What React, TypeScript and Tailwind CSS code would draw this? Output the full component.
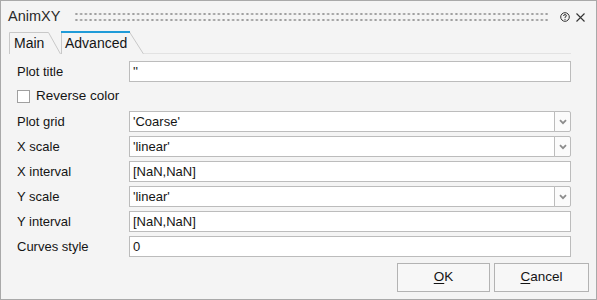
import React from "react";

function Chevron() {
  return (
    <svg width="8" height="6" viewBox="0 0 8 6">
      <path d="M1 1.2 L4 4.2 L7 1.2" fill="none" stroke="#8c8c8c" strokeWidth="1.8" />
    </svg>
  );
}

function Field({ label, value, select }: { label: string; value: string; select?: boolean }) {
  return (
    <div className="flex h-[21px] items-center">
      <div className="w-[128px] pl-[16px] text-[13px] text-[#141414]">{label}</div>
      <div className="flex h-full flex-1">
        <div className="flex flex-1 items-center border border-[#bcbcbc] bg-white pl-[3px] text-[13px] text-[#141414]">
          {value}
        </div>
        {select && (
          <div className="-ml-px flex w-[17px] items-center justify-center rounded-r-[2px] border border-[#bcbcbc] bg-[#fbfbfb]">
            <Chevron />
          </div>
        )}
      </div>
    </div>
  );
}

export default function App() {
  return (
    <div className="flex h-[300px] w-[597px] flex-col border border-[#a9a9a9] bg-[#f4f4f4] font-['Liberation_Sans',Arial,sans-serif]">
      {/* Title bar */}
      <div className="flex h-[30px] items-center pl-[7px] pr-[11px] pt-[2px]">
        <span className="text-[14.5px] text-[#2a2a2a]">AnimXY</span>
        <div className="ml-[14px] h-[12px] flex-1 bg-[radial-gradient(circle,#9c9c9c_1px,transparent_1.2px)] bg-[length:4.75px_6px]" />
        <svg className="ml-[12px]" width="10" height="10" viewBox="0 0 10 10">
          <circle cx="5" cy="5" r="4.3" fill="none" stroke="#333" strokeWidth="1" />
          <path d="M3.6 4 Q3.6 2.6 5 2.6 Q6.4 2.6 6.4 3.8 Q6.4 4.6 5 5.2 V5.9" fill="none" stroke="#333" strokeWidth="1" />
          <circle cx="5" cy="7.3" r="0.6" fill="#333" />
        </svg>
        <svg className="ml-[6px]" width="9" height="9" viewBox="0 0 9 9">
          <path d="M0.5 0.5 L8.5 8.5 M8.5 0.5 L0.5 8.5" stroke="#333" strokeWidth="1.1" />
        </svg>
      </div>

      {/* Tabs */}
      <div className="flex h-[23px] items-end pl-[8px] pr-[25px]">
        <div className="relative flex h-[22px] w-[52px] items-center pl-[5px] pt-[1px] text-[14px] text-[#141414]">
          <svg className="absolute inset-0" width="52" height="22" viewBox="0 0 52 22">
            <path d="M0.5 22 V0.5 H39.5 L51.5 22" fill="none" stroke="#c8c8c8" />
          </svg>
          <span className="relative">Main</span>
        </div>
        <div className="relative flex h-[23px] w-[83px] items-center pl-[4px] pt-[1px] text-[14px] text-[#141414]">
          <svg className="absolute inset-0" width="83" height="23" viewBox="0 0 83 23">
            <path d="M0.5 23 V1 H68.5 L82.5 23" fill="none" stroke="#c8c8c8" />
            <rect x="0" y="0" width="69" height="2" fill="#1f9bd8" />
          </svg>
          <span className="relative">Advanced</span>
        </div>
        <div className="flex-1 border-b border-[#e2e2e2]" />
      </div>

      {/* Form */}
      <div className="flex flex-col gap-[4px] pr-[25px] pt-[7px]">
        <Field label="Plot title" value="''" />
        <div className="flex h-[21px] items-center">
          <div className="ml-[16px] h-[13px] w-[13px] border border-[#a0a0a0] bg-white" />
          <span className="ml-[6px] text-[13.5px] text-[#141414]">Reverse color</span>
        </div>
        <Field label="Plot grid" value="'Coarse'" select />
        <Field label="X scale" value="'linear'" select />
        <Field label="X interval" value="[NaN,NaN]" />
        <Field label="Y scale" value="'linear'" select />
        <Field label="Y interval" value="[NaN,NaN]" />
        <Field label="Curves style" value="0" />
      </div>

      {/* Buttons */}
      <div className="mt-[6px] flex justify-end gap-[4px] pr-[7px]">
        <button className="flex h-[29px] w-[93px] items-center justify-center border border-[#b3b3b3] bg-[#f7f7f7] text-[13.5px] text-[#141414]">
          <span className="underline underline-offset-2">O</span>K
        </button>
        <button className="flex h-[29px] w-[95px] items-center justify-center border border-[#b3b3b3] bg-[#f7f7f7] text-[13.5px] text-[#141414]">
          <span className="underline underline-offset-2">C</span>ancel
        </button>
      </div>
    </div>
  );
}
